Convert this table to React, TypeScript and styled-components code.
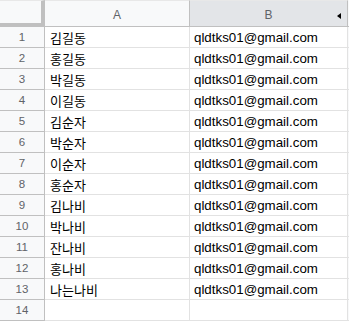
import { type FC } from 'react'
import styled, { createGlobalStyle } from 'styled-components'

const names = [
  '김길동',
  '홍길동',
  '박길동',
  '이길동',
  '김순자',
  '박순자',
  '이순자',
  '홍순자',
  '김나비',
  '박나비',
  '잔나비',
  '홍나비',
  '나는나비',
]
const EMAIL = 'qldtks01@gmail.com'

const GlobalStyle = createGlobalStyle`
  html, body {
    margin: 0;
    padding: 0;
    background: #ffffff;
    overflow: hidden;
  }
  * {
    box-sizing: border-box;
  }
`

const App: FC = () => {
  const rows = [...names, '']
  return (
    <>
      <GlobalStyle />
      <Sheet>
        <Corner />
        <ColHeader>A</ColHeader>
        <ColHeader $active>
          B
          <Arrow />
        </ColHeader>
        <Edge $header />
        {rows.map((name, i) => (
          <Row key={i}>
            <RowNum>{i + 1}</RowNum>
            <Cell $korean>{name}</Cell>
            <Cell>{name ? EMAIL : ''}</Cell>
            <Edge />
          </Row>
        ))}
      </Sheet>
    </>
  )
}

const Sheet = styled.div`
  display: grid;
  grid-template-columns: 45px 145px 158px 1fr;
  grid-auto-rows: 21px;
  grid-template-rows: 27px;
  width: 349px;
  height: 321px;
  overflow: hidden;
  background: #ffffff;
`

const Row = styled.div`
  display: contents;
`

const Corner = styled.div`
  background: #f8f9fa;
  border-right: 4px solid #c0c0c0;
  border-bottom: 4px solid #c0c0c0;
  border-top: 1px solid #e8e8e8;
`

const ColHeader = styled.div<{ $active?: boolean }>`
  position: relative;
  display: flex;
  align-items: center;
  justify-content: center;
  padding-top: 3px;
  background: ${(p) => (p.$active ? '#e3e5e8' : '#f8f9fa')};
  border-top: 1px solid #e8e8e8;
  border-right: 1px solid #c0c0c0;
  border-bottom: 1px solid #c0c0c0;
  color: #5f6368;
  font-family: 'Liberation Sans', Arial, sans-serif;
  font-size: 12px;
`

const Arrow = styled.span`
  position: absolute;
  right: 6px;
  top: 12px;
  width: 0;
  height: 0;
  border-top: 3px solid transparent;
  border-bottom: 3px solid transparent;
  border-right: 4px solid #000000;
`

const Edge = styled.div<{ $header?: boolean }>`
  background: #f8f9fa;
  border-bottom: 1px solid ${(p) => (p.$header ? '#c0c0c0' : '#e2e2e2')};
`

const RowNum = styled.div`
  display: flex;
  align-items: center;
  justify-content: center;
  background: #f8f9fa;
  border-right: 1px solid #c0c0c0;
  border-bottom: 1px solid #c0c0c0;
  color: #5f6368;
  font-family: 'Liberation Sans', Arial, sans-serif;
  font-size: 11.5px;
`

const Cell = styled.div<{ $korean?: boolean }>`
  display: flex;
  align-items: center;
  padding: 0 0 0 ${(p) => (p.$korean ? '5px' : '4px')};
  border-right: 1px solid #e2e2e2;
  border-bottom: 1px solid #e2e2e2;
  color: #000000;
  white-space: nowrap;
  overflow: hidden;
  font-family: ${(p) =>
    p.$korean
      ? "'Noto Sans CJK KR', sans-serif"
      : "'Liberation Sans', Arial, sans-serif"};
  font-size: ${(p) => (p.$korean ? '13px' : '13.33px')};
`

export default App
